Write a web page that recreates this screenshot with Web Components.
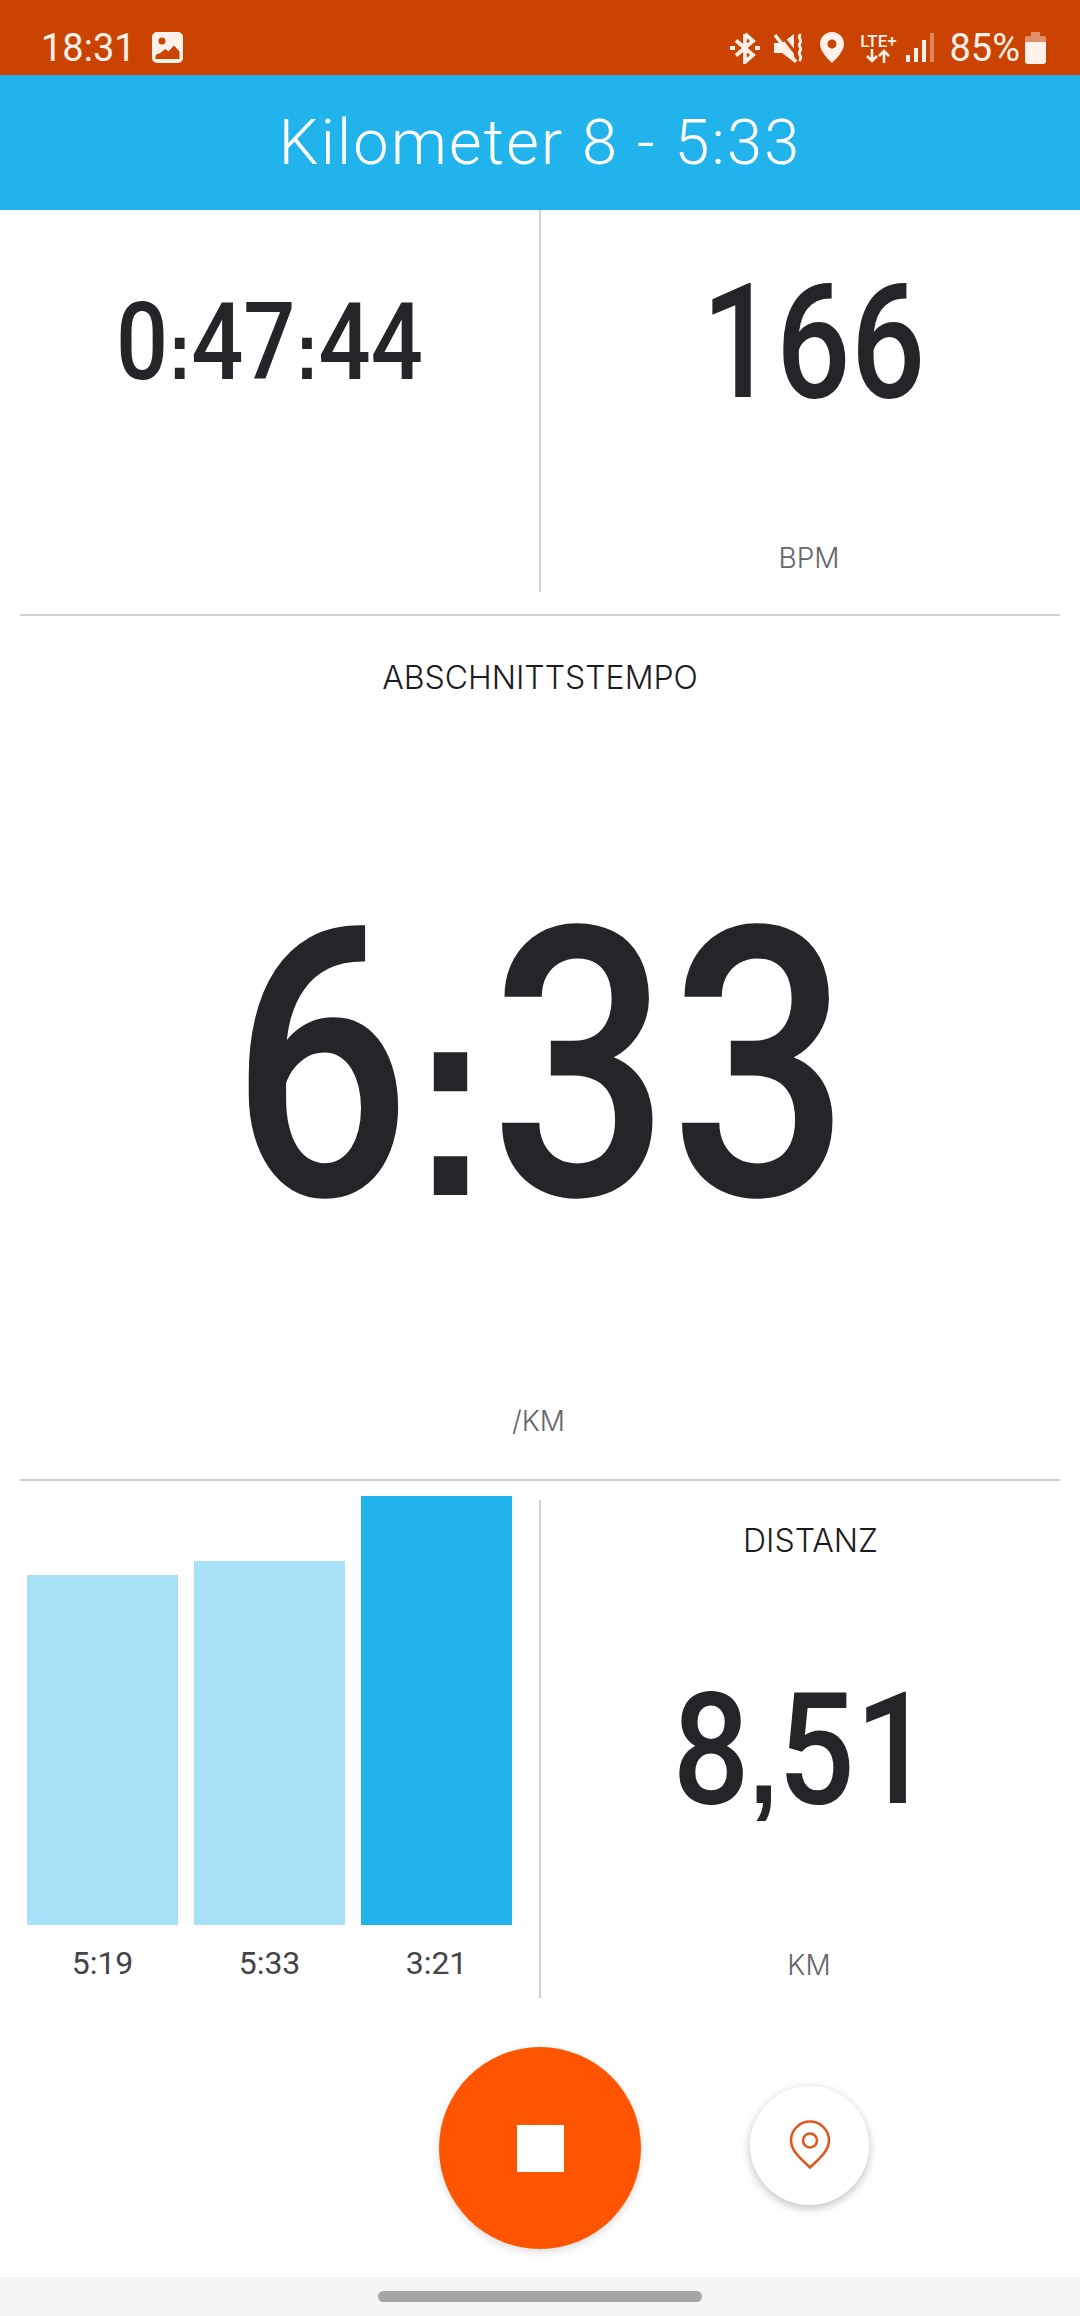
<!DOCTYPE html>
<html lang="de">
<head>
<meta charset="utf-8">
<title>Lauf</title>
<style>
	html, body { margin: 0; padding: 0; background: #fff; }
	body { font-family: Roboto, "Liberation Sans", sans-serif; }
</style>
</head>
<body>
<run-screen>
	<status-bar></status-bar>
	<app-bar>Kilometer 8 - 5:33</app-bar>
	<split-row style="--h: 382px">
		<metric-cell style="--value-h: 264px; --unit-pad: 64px; --size: 108px; --sx: .85" value="0:47:44"></metric-cell>
		<metric-cell style="--value-h: 264px; --unit-pad: 64px; --size: 160px; --sx: .82; --dx: 3px" value="166" unit="BPM"></metric-cell>
	</split-row>
	<h-rule style="--above: 22px"></h-rule>
	<metric-cell style="--h: 863px; --label-pad: 42px; --value-top: 34px; --value-h: 668px; --unit-pad: 1px; --size: 377px; --sx: .84" label="ABSCHNITTSTEMPO" value="6:33" unit="/KM"></metric-cell>
	<h-rule></h-rule>
	<split-row style="--h: 502px; --above: 15px; --line-top: 4px">
		<lap-chart>
			<lap-bar style="--bar-h: 350px" time="5:19"></lap-bar>
			<lap-bar style="--bar-h: 364px" time="5:33"></lap-bar>
			<lap-bar style="--bar-h: 429px" time="3:21" current></lap-bar>
		</lap-chart>
		<metric-cell style="--label-pad: 25px; --value-h: 377px; --unit-pad: 7px; --size: 156px; --sx: .87; --dx: -8px" label="DISTANZ" value="8,51" unit="KM"></metric-cell>
	</split-row>
	<run-controls></run-controls>
	<nav-pill></nav-pill>
</run-screen>

<script>
class RunScreen extends HTMLElement {
	constructor() {
		super();
		this.attachShadow({ mode: "open" });
		this.shadowRoot.innerHTML = `
      <style>
        :host {
          display: flex;
          flex-direction: column;
          width: 1080px;
          height: 2316px;
          overflow: hidden;
          background: #fff;
          font-family: Roboto, "Liberation Sans", sans-serif;
        }
      </style>
      <slot></slot>
    `;
	}
}

class StatusBar extends HTMLElement {
	constructor() {
		super();
		this.attachShadow({ mode: "open" });
		this.shadowRoot.innerHTML = `
      <style>
        :host {
          display: flex;
          align-items: center;
          height: 75px;
          flex: none;
          padding: 20px 34px 0 41px;
          box-sizing: border-box;
          background: #cb4300;
          color: #fdf1ea;
        }
        .clock { font-size: 38px; margin-right: 16px; }
        .spacer { flex: 1; }
        svg { display: block; flex: none; fill: currentColor; }
        .lte {
          display: flex;
          flex-direction: column;
          align-items: center;
          width: 38px;
          margin: 0 9px 0 15px;
        }
        .lte span { font-size: 17px; font-weight: 500; line-height: 16px; }
        .pct { font-size: 38px; margin: 0 5px 0 15px; }
      </style>
      <span class="clock">18:31</span>
      <svg width="31" height="31" viewBox="0 0 31 31">
        <path fill-rule="evenodd" d="M5 0h21a5 5 0 0 1 5 5v21a5 5 0 0 1-5 5H5a5 5 0 0 1-5-5V5a5 5 0 0 1 5-5ZM10 5.500a3.500 3.500 0 1 0 0 7 3.500 3.500 0 0 0 0-7ZM3.500 27h24v-7.500l-5.500-6-5.500 6-3-2.500-6 4.500a4 4 0 0 0-4 3V27Z"/>
      </svg>
      <span class="spacer"></span>
      <svg width="30" height="32" viewBox="0 0 30 32" style="margin-right:14px">
        <path fill="none" stroke="currentColor" stroke-width="3.800" d="M15 2v28l8-7L6 8.500M15 2l8 7L6 23.500M0 16h5M25 16h5"/>
      </svg>
      <svg width="30" height="30" viewBox="0 0 30 30" style="margin-right:16px">
        <path d="M0 10h8L20 1v28L8 20H0Z"/>
        <path fill="none" stroke="#cb4300" stroke-width="3" d="M5 -1l21 27"/>
        <path fill="none" stroke="currentColor" stroke-width="3.400" d="M1 2l21 27"/>
        <path fill="none" stroke="currentColor" stroke-width="2.800" stroke-linecap="round" d="M26 2c-3 3 3 5 0 8s3 5 0 8 3 5 0 9"/>
      </svg>
      <svg width="24" height="31" viewBox="0 0 24 31">
        <path fill-rule="evenodd" d="M12 0a12 12 0 0 1 12 12c0 7-7 14-12 19C7 26 0 19 0 12A12 12 0 0 1 12 0Zm0 7.500a4.500 4.500 0 1 0 0 9 4.500 4.500 0 0 0 0-9Z"/>
      </svg>
      <span class="lte">
        <span>LTE+</span>
        <svg width="24" height="14" viewBox="0 0 24 14">
          <path fill="none" stroke="currentColor" stroke-width="2.600" d="M6 0v12M1 7l5 5 5-5M18 14V2M13 7l5-5 5 5"/>
        </svg>
      </span>
      <svg width="28" height="29" viewBox="0 0 28 29">
        <rect x="0" y="22" width="4" height="7" />
        <rect x="8" y="15" width="4" height="14" />
        <rect x="16" y="7" width="4" height="22" />
        <rect x="24" y="0" width="4" height="29" opacity=".4" />
      </svg>
      <span class="pct">85%</span>
      <svg width="21" height="32" viewBox="0 0 21 32">
        <path opacity=".45" d="M6 0h9v4h4a2 2 0 0 1 2 2v4H0V6a2 2 0 0 1 2-2h4Z"/>
        <path d="M0 10h21v19a3 3 0 0 1-3 3H3a3 3 0 0 1-3-3Z"/>
      </svg>
    `;
	}
}

class AppBar extends HTMLElement {
	constructor() {
		super();
		this.attachShadow({ mode: "open" });
		this.shadowRoot.innerHTML = `
      <style>
        :host {
          display: flex;
          align-items: center;
          justify-content: center;
          flex: none;
          height: 135px;
          background: #20b3ec;
          color: #fff;
          font-size: 63px;
          font-weight: 300;
          letter-spacing: 2.2px;
        }
      </style>
      <slot></slot>
    `;
	}
}

class SplitRow extends HTMLElement {
	constructor() {
		super();
		this.attachShadow({ mode: "open" });
		this.shadowRoot.innerHTML = `
      <style>
        :host {
          display: grid;
          grid-template-columns: 539px 2px 1fr;
          flex: none;
          height: var(--h);
          margin-top: var(--above, 0);
        }
        .line { margin-top: var(--line-top, 0); background: #d0d0d0; }
        slot { display: contents; }
      </style>
      <slot name="left"></slot>
      <div class="line"></div>
      <slot name="right"></slot>
    `;
		[...this.children].forEach((c, i) => {
			c.slot = i === 0 ? "left" : "right";
		});
	}
}

class HRule extends HTMLElement {
	constructor() {
		super();
		this.attachShadow({ mode: "open" });
		this.shadowRoot.innerHTML = `
      <style>
        :host {
          display: block;
          flex: none;
          height: 2px;
          margin: var(--above, 0) 20px 0;
          background: #d0d0d0;
        }
      </style>
    `;
	}
}

class MetricCell extends HTMLElement {
	constructor() {
		super();
		this.attachShadow({ mode: "open" });
		this.shadowRoot.innerHTML = `
      <style>
        :host {
          display: flex;
          flex-direction: column;
          align-items: center;
          flex: none;
          min-width: 0;
          height: var(--h, auto);
        }
        .label {
          padding-top: var(--label-pad, 0);
          font-family: Inter, Roboto, sans-serif;
          font-size: 32px;
          font-weight: 300;
          line-height: 40px;
          color: #1c1c20;
        }
        .value {
          display: flex;
          align-items: center;
          justify-content: center;
          height: var(--value-h);
          margin-top: var(--value-top, 0);
          font-size: var(--size);
          font-weight: 500;
          color: #252529;
          white-space: nowrap;
        }
        .value > span { display: block; transform: translateX(var(--dx, 0)) scaleX(var(--sx)); }
        .sep { font-family: "Liberation Sans", sans-serif; font-weight: 700; font-size: .75em; }
        .unit {
          padding: var(--unit-pad, 0) 3px 0 0;
          font-family: Inter, Roboto, sans-serif;
          font-size: 28px;
          font-weight: 300;
          line-height: 40px;
          color: #66666a;
        }
        [hidden] { display: none; }
      </style>
      <div class="label"></div>
      <div class="value"><span></span></div>
      <div class="unit"></div>
    `;
	}

	connectedCallback() {
		const root = this.shadowRoot;
		const label = this.getAttribute("label");
		const unit = this.getAttribute("unit");
		root.querySelector(".label").textContent = label || "";
		root.querySelector(".label").hidden = !label;
		// Trenner eckig wie im Original, deshalb eigene Schrift
		root.querySelector(".value > span").innerHTML = this.getAttribute("value")
			.replace(/[:,]/g, (s) => `<span class="sep">${s}</span>`);
		root.querySelector(".unit").textContent = unit || "";
		root.querySelector(".unit").hidden = !unit;
	}
}

class LapChart extends HTMLElement {
	constructor() {
		super();
		this.attachShadow({ mode: "open" });
		this.shadowRoot.innerHTML = `
      <style>
        :host {
          display: flex;
          align-items: flex-end;
          gap: 16px;
          padding: 0 0 15px 27px;
        }
      </style>
      <slot></slot>
    `;
	}
}

class LapBar extends HTMLElement {
	constructor() {
		super();
		this.attachShadow({ mode: "open" });
		this.shadowRoot.innerHTML = `
      <style>
        :host {
          display: flex;
          flex-direction: column;
          width: 151px;
        }
        .bar { height: var(--bar-h); background: #a6e1f7; }
        :host([current]) .bar { background: #20b3ec; }
        .time {
          margin-top: 18px;
          font-size: 32px;
          line-height: 40px;
          text-align: center;
          color: #444448;
        }
      </style>
      <div class="bar"></div>
      <div class="time"></div>
    `;
	}

	connectedCallback() {
		this.shadowRoot.querySelector(".time").textContent = this.getAttribute("time");
	}
}

class RunControls extends HTMLElement {
	constructor() {
		super();
		this.attachShadow({ mode: "open" });
		this.shadowRoot.innerHTML = `
      <style>
        :host {
          display: grid;
          grid-template-columns: 439px 202px 1fr;
          align-items: center;
          flex: 1;
          padding-top: 49px;
          padding-bottom: 28px;
          box-sizing: border-box;
        }
        .stop {
          grid-column: 2;
          display: flex;
          align-items: center;
          justify-content: center;
          width: 202px;
          height: 202px;
          border-radius: 50%;
          background: #ff5500;
          box-shadow: 0 3px 8px rgba(0, 0, 0, .14);
        }
        .stop i { display: block; width: 47px; height: 47px; background: #fff; }
        .pin {
          grid-column: 3;
          display: flex;
          align-items: center;
          justify-content: center;
          width: 119px;
          height: 119px;
          margin: -6px 0 0 109px;
          border-radius: 50%;
          background: #fff;
          box-shadow: 0 3px 10px rgba(0, 0, 0, .25);
        }
      </style>
      <div class="stop"><i></i></div>
      <div class="pin">
        <svg width="42" height="50" viewBox="0 0 42 50" fill="none" stroke="#e0581f" stroke-width="2.600">
          <path d="M21 47.500C12 39 2 31 2 20.500a19 19 0 0 1 38 0C40 31 30 39 21 47.500Z"/>
          <circle cx="21" cy="20.500" r="7"/>
        </svg>
      </div>
    `;
	}
}

class NavPill extends HTMLElement {
	constructor() {
		super();
		this.attachShadow({ mode: "open" });
		this.shadowRoot.innerHTML = `
      <style>
        :host {
          display: flex;
          justify-content: center;
          align-items: flex-start;
          flex: none;
          height: 39px;
          padding-top: 14px;
          box-sizing: border-box;
          background: #f5f5f5;
        }
        div { width: 324px; height: 11px; border-radius: 6px; background: #a6a6a6; }
      </style>
      <div></div>
    `;
	}
}

customElements.define("run-screen", RunScreen);
customElements.define("status-bar", StatusBar);
customElements.define("app-bar", AppBar);
customElements.define("split-row", SplitRow);
customElements.define("h-rule", HRule);
customElements.define("metric-cell", MetricCell);
customElements.define("lap-chart", LapChart);
customElements.define("lap-bar", LapBar);
customElements.define("run-controls", RunControls);
customElements.define("nav-pill", NavPill);
</script>
</body>
</html>
